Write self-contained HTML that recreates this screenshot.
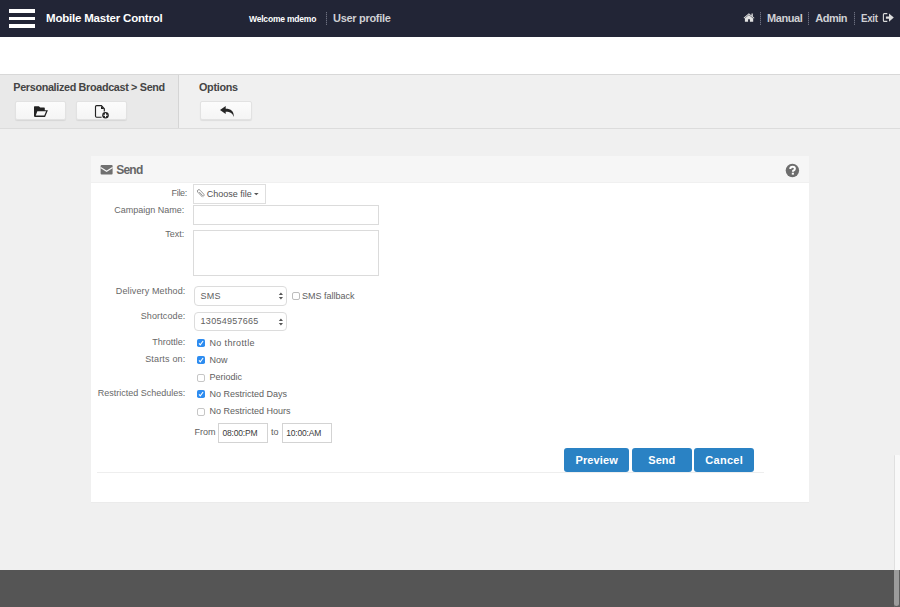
<!DOCTYPE html>
<html><head><meta charset="utf-8">
<style>
*{margin:0;padding:0;box-sizing:border-box}
html,body{width:900px;height:607px;overflow:hidden;background:#f0f0f0;font-family:"Liberation Sans",sans-serif}
.a{position:absolute}
.t{position:absolute;white-space:nowrap;line-height:1}
.inp{background:#fff;border:1px solid #d9d9d9}
.tbtn{top:101.2px;height:19.1px;width:51.5px;background:linear-gradient(#fcfcfc,#f5f5f5);border:1px solid #e2e2e2;border-radius:2px;box-shadow:0 1px 1px rgba(0,0,0,.08)}
.btn{position:absolute;top:448px;height:24px;background:#2a82c4;border-radius:3px;color:#fff;font-weight:bold;font-size:11px;line-height:24px;text-align:center}
</style></head><body>
<div class="a" style="left:0px;top:0px;width:900px;height:37px;background:#222536"></div>
<div class="a" style="left:9px;top:9.1px;width:26px;height:3.8px;background:#fff"></div>
<div class="a" style="left:9px;top:16.6px;width:26px;height:3.8px;background:#fff"></div>
<div class="a" style="left:9px;top:24.1px;width:26px;height:3.8px;background:#fff"></div>
<div class="t" style="left:46px;top:13.00px;font-size:11.5px;color:#fff;font-weight:bold;letter-spacing:-0.2px;">Mobile Master Control</div>
<div class="t" style="left:249px;top:15.00px;font-size:8.5px;color:#fff;font-weight:bold;letter-spacing:-0.2px;">Welcome mdemo</div>
<div class="t" style="left:333px;top:13.00px;font-size:11px;color:#cfd0d4;font-weight:bold;letter-spacing:-0.3px;">User profile</div>
<div class="a" style="left:326px;top:12px;width:1px;height:13px;background:repeating-linear-gradient(#6c6f7e 0 1.2px,#3a3d50 1.2px 2px)"></div>
<div class="a" style="left:760px;top:12px;width:1px;height:12.5px;background:repeating-linear-gradient(#6c6f7e 0 1.2px,#3a3d50 1.2px 2px)"></div>
<div class="a" style="left:808.3px;top:12px;width:1px;height:12.5px;background:repeating-linear-gradient(#6c6f7e 0 1.2px,#3a3d50 1.2px 2px)"></div>
<div class="a" style="left:853.5px;top:12px;width:1px;height:12.5px;background:repeating-linear-gradient(#6c6f7e 0 1.2px,#3a3d50 1.2px 2px)"></div>
<div class="t" style="left:767px;top:13.00px;font-size:11px;color:#cfd0d4;font-weight:bold;letter-spacing:-0.4px;">Manual</div>
<div class="t" style="left:815.3px;top:13.00px;font-size:11px;color:#cfd0d4;font-weight:bold;letter-spacing:-0.5px;">Admin</div>
<div class="t" style="left:861px;top:13.00px;font-size:11px;color:#cfd0d4;font-weight:bold;letter-spacing:-0.3px;transform:scaleX(0.88);transform-origin:0 0;">Exit</div>
<svg class="a" style="left:740px;top:8px" width="20" height="20" viewBox="0 0 20 20"><path d="M3.6,9.8 L8.9,5.2 L11.5,7.4 V5.4 H12.8 V8.5 L14.5,9.9 L13.9,10.6 L8.9,6.4 L4.2,10.5 Z" fill="#e2e2e2"/><path d="M4.9,10.2 L8.9,6.9 L13.2,10.4 V13.8 H9.9 V11.2 H8.1 V13.8 H4.9 Z" fill="#e2e2e2"/></svg>
<svg class="a" style="left:876px;top:8px" width="22" height="20" viewBox="0 0 22 20"><path d="M11.3,5.6 H8.3 Q7.4,5.6 7.4,6.6 V12.4 Q7.4,13.4 8.3,13.4 H11.3" fill="none" stroke="#dcdcdc" stroke-width="1.1"/><path d="M9.9,8.5 H13 V5.6 L17.8,9.6 L13,13.7 V10.8 H9.9 Z" fill="#dcdcdc"/></svg>
<div class="a" style="left:0px;top:37px;width:900px;height:37px;background:#fff"></div>
<div class="a" style="left:0px;top:74px;width:900px;height:1px;background:#d8d8d8"></div>
<div class="a" style="left:0px;top:75px;width:178px;height:53px;background:#e9e9e9"></div>
<div class="a" style="left:178px;top:75px;width:1px;height:53px;background:#d5d5d5"></div>
<div class="a" style="left:0px;top:128px;width:900px;height:1px;background:#dcdcdc"></div>
<div class="t" style="left:13.3px;top:82.00px;font-size:10.8px;color:#444;font-weight:bold;letter-spacing:-0.33px;">Personalized Broadcast &gt; Send</div>
<div class="t" style="left:199px;top:82.00px;font-size:10.8px;color:#444;font-weight:bold;letter-spacing:-0.3px;">Options</div>
<div class="a tbtn" style="left:14.5px;width:51.6px"></div>
<div class="a tbtn" style="left:75.5px;width:51.6px"></div>
<div class="a tbtn" style="left:200.3px;width:52.2px"></div>
<svg class="a" style="left:28px;top:100px" width="26" height="22" viewBox="0 0 26 22"><path d="M6.6,6.2 H10.9 L12.2,7.6 H16.1 Q16.8,7.6 16.8,8.3 V10.2 H19.9 L17.3,16.4 Q17.1,16.9 16.5,16.9 H6.8 Q6,16.9 6,16.1 V6.9 Q6,6.2 6.6,6.2 Z M9.3,11.2 L7.8,15.5 H16.3 L18.1,11.2 Z" fill="#222" fill-rule="evenodd"/></svg>
<svg class="a" style="left:89px;top:100px" width="26" height="22" viewBox="0 0 26 22"><path d="M12.6,17.2 H7.6 Q6.5,17.2 6.5,16.1 V6.7 Q6.5,5.6 7.6,5.6 H12.4 L15.3,8.7 V11.5" fill="none" stroke="#222" stroke-width="1.15"/><path d="M12,5.9 L15.3,9 H12 Z" fill="#222"/><circle cx="16.5" cy="15.3" r="3.3" fill="#222"/><path d="M16.5,13.3 V17.3 M14.5,15.3 H18.5" stroke="#fff" stroke-width="1.1"/></svg>
<svg class="a" style="left:213px;top:100px" width="26" height="22" viewBox="0 0 26 22"><path d="M7,10 L12.7,5.9 V8.7 C18,8.7 21,11 20.8,16.9 C19.5,13.2 17.5,11.7 12.7,11.7 V14.1 Z" fill="#262626"/></svg>
<div class="a" style="left:90.5px;top:155.7px;width:718.5px;height:346.3px;background:#fff;box-shadow:0 1px 0 0 #ebebeb"></div>
<div class="a" style="left:90.5px;top:155.7px;width:718.5px;height:27.5px;background:#f6f6f6;border-bottom:1px solid #f0f0f0"></div>
<div class="t" style="left:116.3px;top:164.00px;font-size:12px;color:#666;font-weight:bold;letter-spacing:-0.8px;">Send</div>
<svg class="a" style="left:96px;top:160px" width="22" height="20" viewBox="0 0 22 20"><rect x="4.6" y="4.9" width="12" height="9.6" rx="1" fill="#707070"/><path d="M4.6,7.4 L10.6,11.3 L16.6,7.4" fill="none" stroke="#f6f6f6" stroke-width="1.15"/></svg>
<svg class="a" style="left:780px;top:158px" width="25" height="25" viewBox="0 0 25 25"><circle cx="12.4" cy="12.5" r="6.7" fill="#6e6e6e"/><path d="M10.3,11 Q10.3,8.7 12.6,8.7 Q14.9,8.7 14.9,10.7 Q14.9,11.9 13.6,12.5 Q12.9,12.8 12.9,13.8" fill="none" stroke="#fff" stroke-width="2"/><rect x="11.8" y="14.7" width="2.1" height="1.9" fill="#fff"/></svg>
<div class="t" style="left:0;width:187px;text-align:right;top:189.00px;font-size:9px;color:#686868;letter-spacing:-0.3px;">File:</div>
<div class="t" style="left:0;width:184.3px;text-align:right;top:206.00px;font-size:9px;color:#686868;">Campaign Name:</div>
<div class="t" style="left:0;width:184.3px;text-align:right;top:230.00px;font-size:9px;color:#686868;">Text:</div>
<div class="t" style="left:0;width:185.43px;text-align:right;top:287.00px;font-size:9px;color:#686868;letter-spacing:0.13px;">Delivery Method:</div>
<div class="t" style="left:0;width:185.42000000000002px;text-align:right;top:312.00px;font-size:9px;color:#686868;letter-spacing:0.12px;">Shortcode:</div>
<div class="t" style="left:0;width:185.3px;text-align:right;top:338.00px;font-size:9px;color:#686868;">Throttle:</div>
<div class="t" style="left:0;width:185.48000000000002px;text-align:right;top:355.00px;font-size:9px;color:#686868;letter-spacing:0.18px;">Starts on:</div>
<div class="t" style="left:0;width:185.3px;text-align:right;top:389.00px;font-size:9px;color:#686868;">Restricted Schedules:</div>
<div class="a" style="left:193px;top:184px;width:73px;height:20px;background:#fff;border:1px solid #dedede"></div>
<svg class="a" style="left:193.2px;top:186.4px" width="16" height="16" viewBox="0 0 16 16"><path d="M9.6,11.2 L4.8,6.2 Q3.6,4.8 5,3.9 Q6.2,3.1 7.2,4.3 L10.9,8.3 Q11.6,9.2 10.9,9.8 Q10.2,10.3 9.5,9.5 L6.2,6" fill="none" stroke="#8a8a8a" stroke-width="0.9"/></svg>
<div class="t" style="left:206.7px;top:190.00px;font-size:9px;color:#505050;">Choose file</div>
<svg class="a" style="left:253px;top:192px" width="7" height="4" viewBox="0 0 7 4"><path d="M1,1 H5.6 L3.3,3.3 Z" fill="#555"/></svg>
<div class="a" style="left:193px;top:205px;width:186px;height:20px;background:#fff;border:1px solid #dbdbdb"></div>
<div class="a" style="left:193px;top:230px;width:186px;height:46px;background:#fff;border:1px solid #dbdbdb"></div>
<div class="a" style="left:194.4px;top:286.3px;width:93px;height:19.7px;background:#fff;border:1px solid #dcdcdc;border-radius:4px"></div>
<div class="t" style="left:200.6px;top:292.00px;font-size:9px;color:#606060;letter-spacing:0.2px;">SMS</div>
<svg class="a" style="left:277px;top:291.3px" width="8" height="10" viewBox="0 0 8 10"><path d="M1.8,4 L3.9,1.5 L6,4 Z M1.8,6 L3.9,8.5 L6,6 Z" fill="#555"/></svg>
<div class="a" style="left:194.4px;top:311.7px;width:93px;height:19.7px;background:#fff;border:1px solid #dcdcdc;border-radius:4px"></div>
<div class="t" style="left:200.6px;top:317.00px;font-size:9px;color:#606060;letter-spacing:0.27px;">13054957665</div>
<svg class="a" style="left:277px;top:316.7px" width="8" height="10" viewBox="0 0 8 10"><path d="M1.8,4 L3.9,1.5 L6,4 Z M1.8,6 L3.9,8.5 L6,6 Z" fill="#555"/></svg>
<div class="a" style="left:292px;top:292px;width:8px;height:8px;background:#fff;border:1px solid #bdbdbd;border-radius:2px"></div>
<div class="t" style="left:302px;top:292.00px;font-size:9px;color:#606060;">SMS fallback</div>
<svg class="a" style="left:196.5px;top:338.9px" width="8" height="8" viewBox="0 0 8 8"><rect width="8" height="8" rx="1.8" fill="#2d8cf0"/><path d="M2,4.3 L3.3,5.8 L6.1,2" fill="none" stroke="#fff" stroke-width="1.1"/></svg>
<div class="t" style="left:209.5px;top:339.00px;font-size:9px;color:#606060;letter-spacing:0.35px;">No throttle</div>
<svg class="a" style="left:196.5px;top:356px" width="8" height="8" viewBox="0 0 8 8"><rect width="8" height="8" rx="1.8" fill="#2d8cf0"/><path d="M2,4.3 L3.3,5.8 L6.1,2" fill="none" stroke="#fff" stroke-width="1.1"/></svg>
<div class="t" style="left:209.5px;top:356.00px;font-size:9px;color:#606060;">Now</div>
<div class="a" style="left:196.5px;top:373.5px;width:8px;height:8px;background:#fff;border:1px solid #c6c6c6;border-radius:2px"></div>
<div class="t" style="left:209.5px;top:373.00px;font-size:9px;color:#606060;">Periodic</div>
<svg class="a" style="left:196.5px;top:390.3px" width="8" height="8" viewBox="0 0 8 8"><rect width="8" height="8" rx="1.8" fill="#2d8cf0"/><path d="M2,4.3 L3.3,5.8 L6.1,2" fill="none" stroke="#fff" stroke-width="1.1"/></svg>
<div class="t" style="left:209.5px;top:390.00px;font-size:9px;color:#606060;">No Restricted Days</div>
<div class="a" style="left:196.5px;top:407.8px;width:8px;height:8px;background:#fff;border:1px solid #c6c6c6;border-radius:2px"></div>
<div class="t" style="left:209.5px;top:407.00px;font-size:9px;color:#606060;">No Restricted Hours</div>
<div class="t" style="left:194.5px;top:428.00px;font-size:9px;color:#606060;">From</div>
<div class="a" style="left:218px;top:423px;width:50px;height:20px;background:#fff;border:1px solid #d3d3d3"></div>
<div class="t" style="left:222.5px;top:429.00px;font-size:8.5px;color:#3a3a3a;letter-spacing:-0.2px;">08:00:PM</div>
<div class="t" style="left:271px;top:428.00px;font-size:9px;color:#606060;">to</div>
<div class="a" style="left:282px;top:423px;width:50px;height:20px;background:#fff;border:1px solid #d3d3d3"></div>
<div class="t" style="left:286.3px;top:429.00px;font-size:8.5px;color:#3a3a3a;letter-spacing:-0.2px;">10:00:AM</div>
<div class="a" style="left:97px;top:472px;width:667px;height:1px;background:#eeeeee"></div>
<div class="btn" style="left:564.3px;width:64.7px;letter-spacing:0.1px;text-indent:0.1px">Preview</div>
<div class="btn" style="left:632px;width:59.5px;letter-spacing:0px;text-indent:0px">Send</div>
<div class="btn" style="left:694.3px;width:59.5px;letter-spacing:0.3px;text-indent:0.3px">Cancel</div>
<div class="a" style="left:0px;top:570px;width:900px;height:37px;background:#555"></div>
<div class="a" style="left:893.5px;top:455px;width:6.5px;height:115px;background:#f9f9f9;border-left:1px solid #e0e0e0;border-radius:1px 1px 0 0"></div>
<div class="a" style="left:893.5px;top:570px;width:6.5px;height:37px;background:#5e5e5e;border-left:1px solid #666"></div>
<div class="a" style="left:894.3px;top:570px;width:5px;height:35.5px;background:#9c9c9c;border-radius:0 0 2.5px 2.5px"></div>
</body></html>
